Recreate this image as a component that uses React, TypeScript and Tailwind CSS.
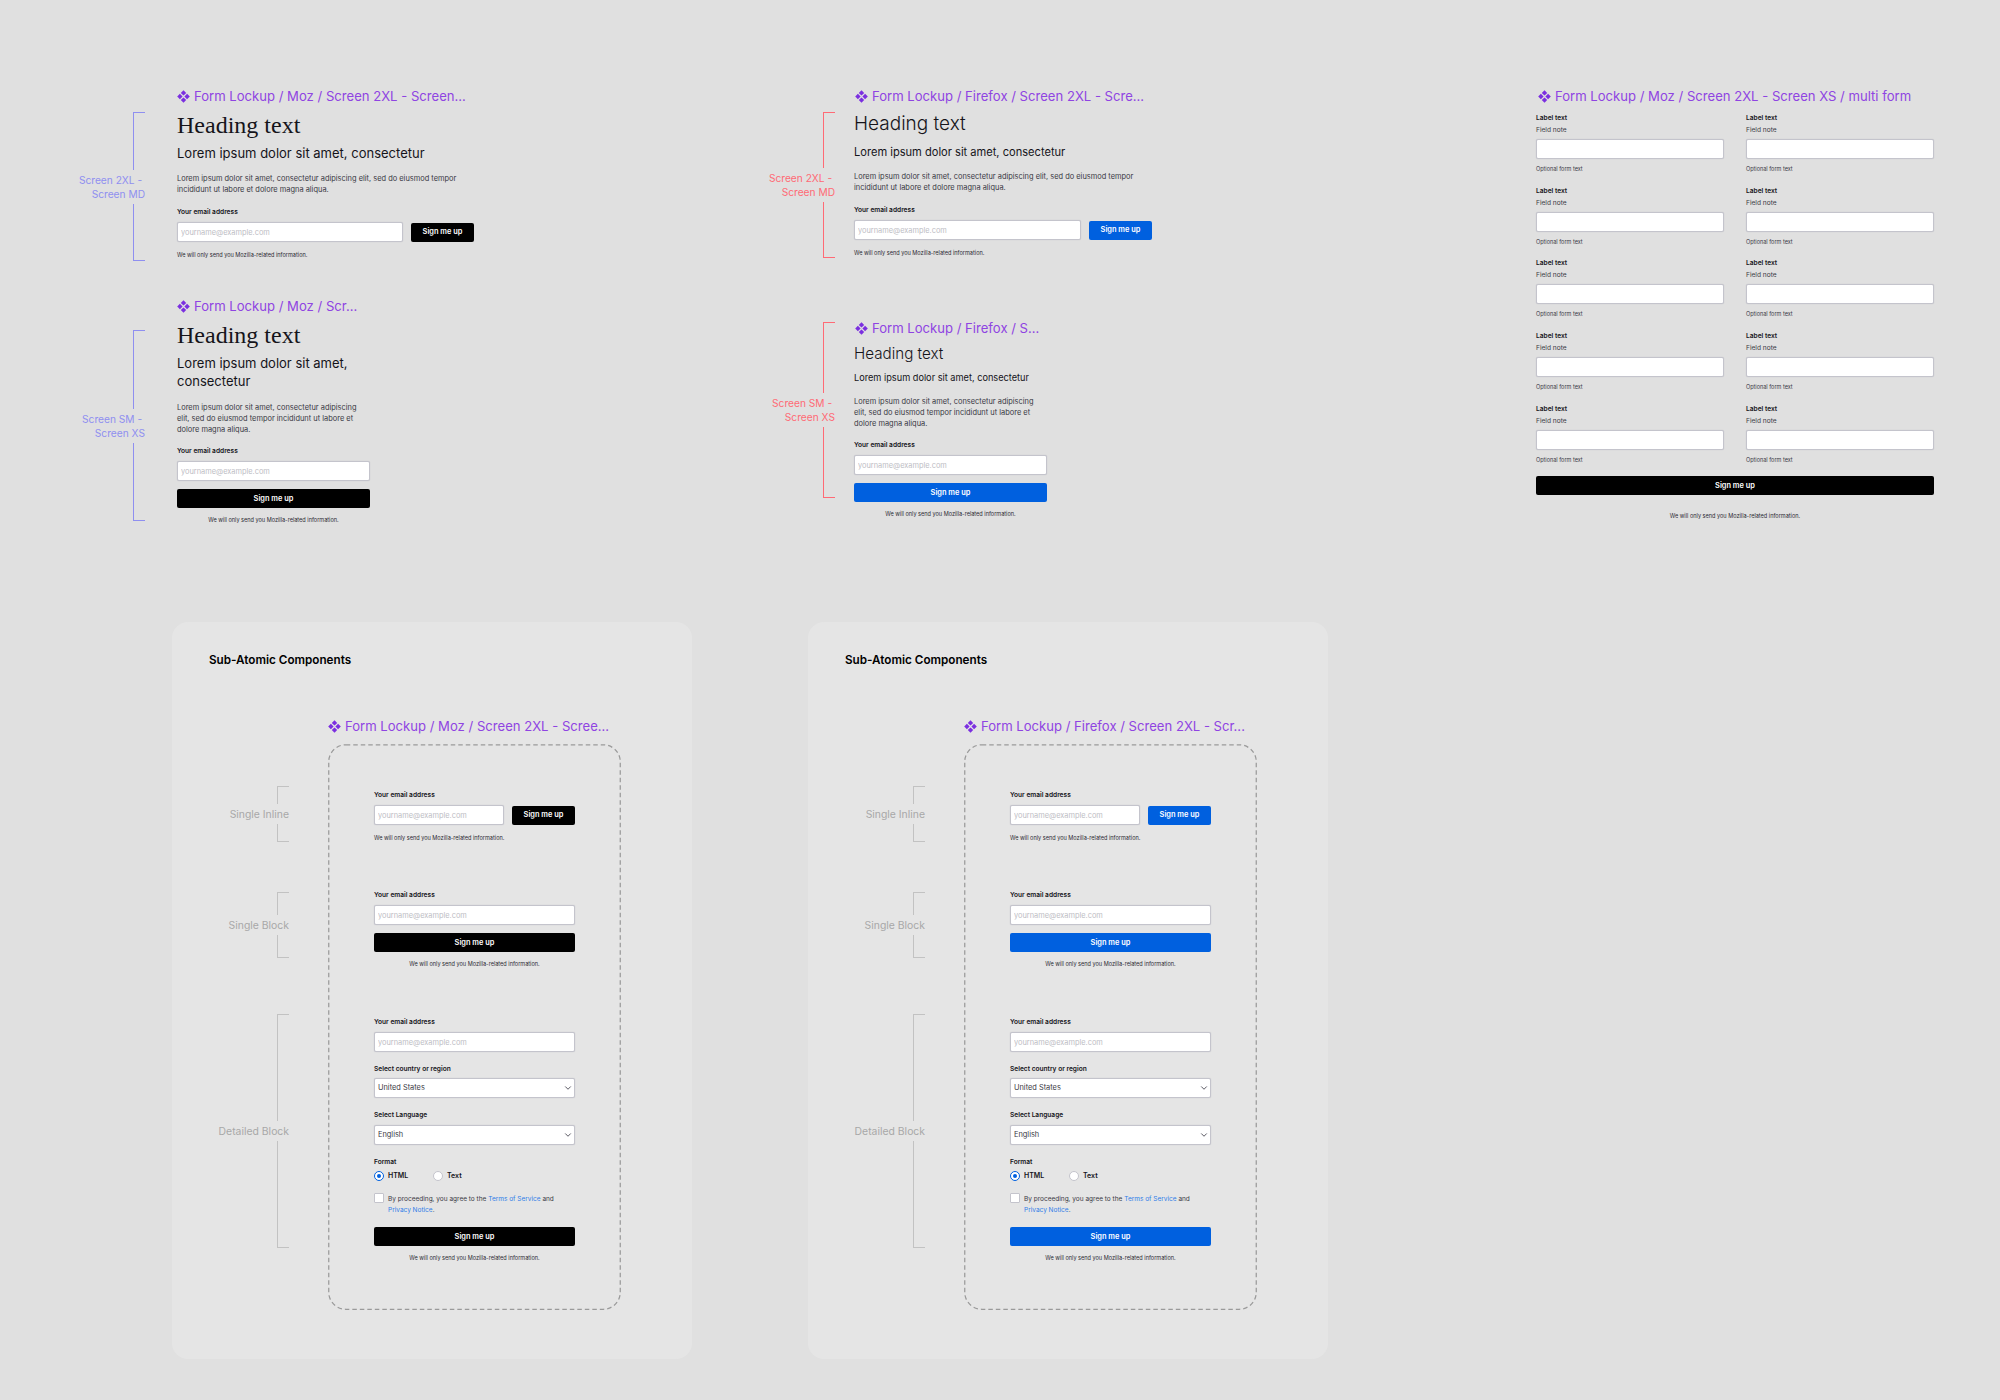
import React from 'react';
import { ChevronDown } from 'lucide-react';

type Brand = 'moz' | 'firefox';

const btnColor: Record<Brand, string> = {
  moz: 'bg-black',
  firefox: 'bg-[#0060df]',
};

const FrameTitle = ({ text, className = '' }: { text: string; className?: string }) => (
  <div className={`flex h-4 items-center gap-[4px] whitespace-nowrap text-[13.1px] leading-4 text-[#8f44e2] ${className}`}>
    <svg viewBox="0 0 13 13" className="h-[13px] w-[13px] shrink-0 fill-[#7b2fe0]">
      <path d="M6.5 0.2 9.2 2.9 6.5 5.6 3.8 2.9Z" />
      <path d="M2.9 3.8 5.6 6.5 2.9 9.2 0.2 6.5Z" />
      <path d="M10.1 3.8 12.8 6.5 10.1 9.2 7.4 6.5Z" />
      <path d="M6.5 7.4 9.2 10.1 6.5 12.8 3.8 10.1Z" />
    </svg>
    <span>{text}</span>
  </div>
);

const Label = ({ children, className = '' }: { children: React.ReactNode; className?: string }) => (
  <div className={`h-[10px] whitespace-nowrap text-[6.6px] font-semibold leading-[11px] text-[#15141a] ${className}`}>{children}</div>
);

const Field = ({ placeholder, className = '' }: { placeholder?: string; className?: string }) => (
  <input
    readOnly
    placeholder={placeholder}
    className={`block h-5 w-full rounded-[2px] border border-[#c4c4cc] bg-white px-[3px] text-[7.4px] shadow-[0_0_1px_#b8b8c2] placeholder:text-[#bdbdc4] ${className}`}
  />
);

const Btn = ({ brand, className = '' }: { brand: Brand; className?: string }) => (
  <button className={`block h-[19px] rounded-[2px] text-[7.4px] font-semibold text-white ${btnColor[brand]} ${className}`}>
    Sign me up
  </button>
);

const Note = ({ className = '' }: { className?: string }) => (
  <div className={`h-[10px] whitespace-nowrap text-[5.55px] leading-[11px] text-[#2b2a33] ${className}`}>
    We will only send you Mozilla-related information.
  </div>
);

const Body = ({ className = '' }: { className?: string }) => (
  <p className={`text-[7.45px] leading-[11px] text-[#3a3944] ${className}`}>
    Lorem ipsum dolor sit amet, consectetur adipiscing elit, sed do eiusmod tempor incididunt ut labore et dolore magna aliqua.
  </p>
);

// annotation bracket with its caption sitting on the line
const Bracket = ({ lines, className, line, text }: { lines: string[]; className: string; line: string; text: string }) => (
  <div className={`absolute flex w-[112px] flex-col items-end ${className}`}>
    <div className={`w-3 flex-1 border-l border-t ${line}`} />
    <div className={`whitespace-pre text-right leading-[14px] ${text}`}>
      {lines.map(l => (
        <div key={l}>{l}</div>
      ))}
    </div>
    <div className={`w-3 flex-1 border-b border-l ${line}`} />
  </div>
);

const InlineForm = ({ brand, width }: { brand: Brand; width: string }) => (
  <div className={width}>
    <Label>Your email address</Label>
    <div className="mt-[5px] flex items-center gap-2">
      <Field placeholder="yourname@example.com" className="flex-1" />
      <Btn brand={brand} className="w-[63px] shrink-0" />
    </div>
    <Note className="mt-2" />
  </div>
);

const BlockForm = ({ brand }: { brand: Brand }) => (
  <div className="w-full">
    <Label>Your email address</Label>
    <Field placeholder="yourname@example.com" className="mt-[5px]" />
    <Btn brand={brand} className="mt-2 w-full" />
    <Note className="mt-[7px] text-center" />
  </div>
);

const Select = ({ value, className = '' }: { value: string; className?: string }) => (
  <div className={`relative ${className}`}>
    <select className="block h-5 w-full appearance-none rounded-[2px] border border-[#c4c4cc] bg-white px-[3px] text-[7.4px] text-[#3a3944] shadow-[0_0_1px_#b8b8c2]">
      <option>{value}</option>
    </select>
    <ChevronDown className="absolute right-[2px] top-[5px] h-[10px] w-[10px] text-[#3a3944]" strokeWidth={2} />
  </div>
);

const DetailedForm = ({ brand }: { brand: Brand }) => (
  <div className="mt-[48px] w-[201px]">
    <Label>Your email address</Label>
    <Field placeholder="yourname@example.com" className="mt-[5px]" />
    <Label className="mt-[12px]">Select country or region</Label>
    <Select value="United States" className="mt-[4px]" />
    <Label className="mt-[12px]">Select Language</Label>
    <Select value="English" className="mt-[5px]" />
    <Label className="mt-[12px]">Format</Label>
    <div className="mt-[4px] flex h-[10px] items-center text-[7px] font-semibold text-[#15141a]">
      <span className="flex h-[10px] w-[10px] items-center justify-center rounded-full border border-[#0060df] bg-white">
        <span className="h-1 w-1 rounded-full bg-[#0060df]" />
      </span>
      <span className="ml-1 w-[45px]">HTML</span>
      <span className="h-[10px] w-[10px] rounded-full border border-[#c4c4cc] bg-white" />
      <span className="ml-1">Text</span>
    </div>
    <div className="mt-[12px] flex items-start gap-1">
      <span className="h-[10px] w-[10px] shrink-0 rounded-[1px] border border-[#c4c4cc] bg-white" />
      <p className="mt-px text-[6.5px] leading-[11px] text-[#3a3944]">
        By proceeding, you agree to the <span className="text-[#2f7de8]">Terms of Service</span> and{' '}
        <span className="text-[#2f7de8]">Privacy Notice</span>.
      </p>
    </div>
    <Btn brand={brand} className="mt-[11px] w-full" />
    <Note className="mt-[7px] text-center" />
  </div>
);

const Panel = ({ brand, title, className }: { brand: Brand; title: string; className: string }) => (
  <section className={`absolute top-[622px] h-[737px] w-[520px] rounded-2xl bg-[#e5e5e5] ${className}`}>
    <h2 className="ml-[37px] mt-[30px] text-[11.7px] font-semibold leading-4 text-black">Sub-Atomic Components</h2>
    <FrameTitle text={title} className="ml-[156px] mt-[50px]" />
    <div className="relative ml-[156px] mt-[10px] flex h-[566px] w-[293px] flex-col items-center pt-[46px]">
      <svg className="absolute inset-0 h-full w-full" viewBox="0 0 293 566" fill="none">
        <rect x="0.75" y="0.75" width="291.5" height="564.5" rx="17" stroke="#9a9a9a" strokeWidth="1.25" strokeDasharray="4.5 3" />
      </svg>
      <InlineForm brand={brand} width="relative w-[201px]" />
      <div className="relative mt-[47px] w-[201px]">
        <BlockForm brand={brand} />
      </div>
      <div className="relative">
        <DetailedForm brand={brand} />
      </div>
    </div>
    <Bracket lines={['Single Inline']} className="left-[5px] top-[164px] h-[56px]" line="border-[#c2c2c2]" text="pb-[2px] pt-[4px] text-[10.4px] text-[#a8a8a8]" />
    <Bracket lines={['Single Block']} className="left-[5px] top-[270px] h-[66px]" line="border-[#c2c2c2]" text="pb-[2px] pt-[4px] text-[10.4px] text-[#a8a8a8]" />
    <Bracket lines={['Detailed Block']} className="left-[5px] top-[392px] h-[234px]" line="border-[#c2c2c2]" text="pb-[2px] pt-[4px] text-[10.4px] text-[#a8a8a8]" />
  </section>
);

const MultiField = () => (
  <div>
    <Label>Label text</Label>
    <div className="mt-[2px] h-[10px] text-[6.6px] leading-[10px] text-[#3a3944]">Field note</div>
    <Field className="mt-[4px]" />
    <div className="mt-[5px] h-[10px] text-[5.5px] leading-[10px] text-[#3a3944]">Optional form text</div>
  </div>
);

export default function App() {
  return (
    <div className="relative h-[1400px] w-[2000px] overflow-hidden bg-[#e0e0e0] font-['Inter',sans-serif]">
      {/* Moz, wide */}
      <div className="absolute left-[177px] top-[88px] w-[300px]">
        <FrameTitle text="Form Lockup / Moz / Screen 2XL - Screen..." />
        <h1 className="mt-[7px] font-['Liberation_Serif',serif] text-[24px] leading-7 text-[#15141a]">Heading text</h1>
        <h3 className="mt-1 text-[13px] leading-5 text-[#15141a]">Lorem ipsum dolor sit amet, consectetur</h3>
        <Body className="mt-[10px] w-[297px]" />
        <div className="mt-[12px]">
          <InlineForm brand="moz" width="w-[297px]" />
        </div>
      </div>
      <Bracket lines={['Screen 2XL - ', 'Screen MD']} className="left-[33px] top-[112px] h-[149px]" line="border-[#8f8ff0]" text="py-[3px] text-[10.2px] text-[#8f8ff0]" />

      {/* Moz, narrow */}
      <div className="absolute left-[177px] top-[298px] w-[193px]">
        <FrameTitle text="Form Lockup / Moz / Scr..." />
        <h1 className="mt-[7px] font-['Liberation_Serif',serif] text-[24px] leading-7 text-[#15141a]">Heading text</h1>
        <h3 className="mt-[5px] text-[13px] leading-[18px] text-[#15141a]">Lorem ipsum dolor sit amet, consectetur</h3>
        <Body className="mt-[12px]" />
        <div className="mt-[11px]">
          <BlockForm brand="moz" />
        </div>
      </div>
      <Bracket lines={['Screen SM - ', 'Screen XS']} className="left-[33px] top-[330px] h-[191px]" line="border-[#8f8ff0]" text="py-[3px] text-[10.2px] text-[#8f8ff0]" />

      {/* Firefox, wide */}
      <div className="absolute left-[854px] top-[88px] w-[300px]">
        <FrameTitle text="Form Lockup / Firefox / Screen 2XL - Scre..." className="ml-px" />
        <h1 className="mt-[6px] text-[19px] font-light leading-7 text-[#15141a]">Heading text</h1>
        <h3 className="mt-[4px] text-[11.1px] leading-5 text-[#15141a]">Lorem ipsum dolor sit amet, consectetur</h3>
        <Body className="mt-[9px] w-[297px]" />
        <div className="mt-[12px]">
          <InlineForm brand="firefox" width="w-[298px]" />
        </div>
      </div>
      <Bracket lines={['Screen 2XL - ', 'Screen MD']} className="left-[723px] top-[112px] h-[146px]" line="border-[#ff6a75]" text="py-[3px] text-[10.2px] text-[#ff6a75]" />

      {/* Firefox, narrow */}
      <div className="absolute left-[854px] top-[320px] w-[193px]">
        <FrameTitle text="Form Lockup / Firefox / S..." className="ml-px" />
        <h1 className="mt-[6px] text-[15.2px] font-light leading-6 text-[#15141a]">Heading text</h1>
        <h3 className="mt-[2px] whitespace-nowrap text-[9.2px] leading-5 text-[#15141a]">Lorem ipsum dolor sit amet, consectetur</h3>
        <Body className="mt-[8px]" />
        <div className="mt-[11px]">
          <BlockForm brand="firefox" />
        </div>
      </div>
      <Bracket lines={['Screen SM - ', 'Screen XS']} className="left-[723px] top-[322px] h-[176px]" line="border-[#ff6a75]" text="py-[3px] text-[10.2px] text-[#ff6a75]" />

      {/* Moz, multi field */}
      <div className="absolute left-[1536px] top-[88px] w-[398px]">
        <FrameTitle text="Form Lockup / Moz / Screen 2XL - Screen XS / multi form" className="ml-[2px]" />
        <div className="mt-[9px] grid grid-cols-2 gap-x-[22px] gap-y-[11.7px]">
          {Array.from({ length: 10 }, (_, i) => (
            <MultiField key={i} />
          ))}
        </div>
        <Btn brand="moz" className="mt-[11px] w-full" />
        <Note className="mt-[16px] text-center" />
      </div>

      <Panel brand="moz" title="Form Lockup / Moz / Screen 2XL - Scree..." className="left-[172px]" />
      <Panel brand="firefox" title="Form Lockup / Firefox / Screen 2XL - Scr..." className="left-[808px]" />
    </div>
  );
}
